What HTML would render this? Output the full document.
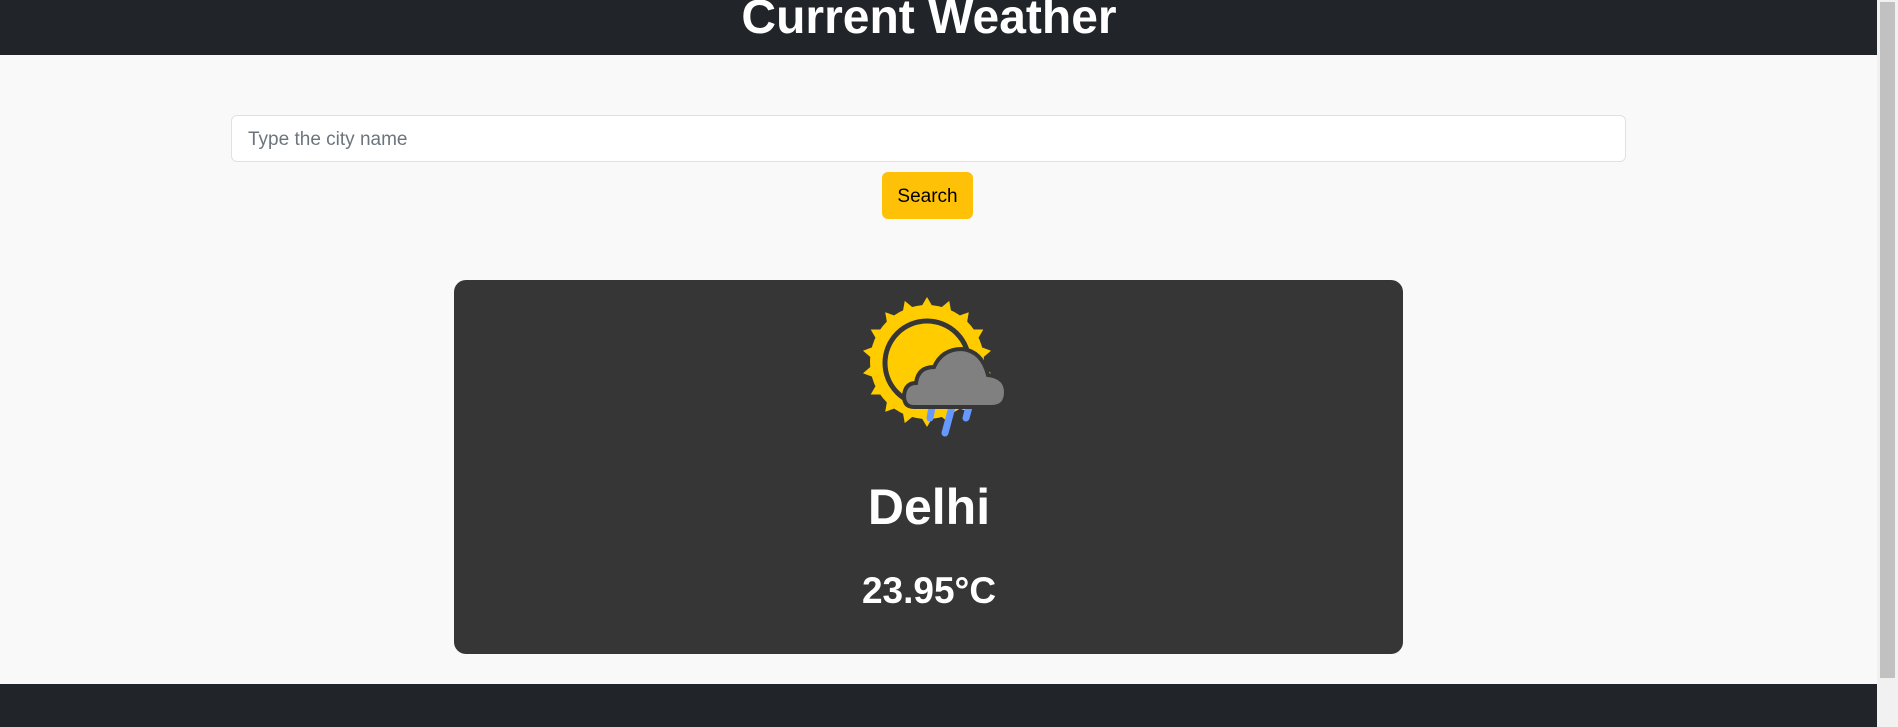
<!DOCTYPE html>
<html><head><meta charset="utf-8"><style>
html,body{margin:0;padding:0;width:1898px;height:727px;overflow:hidden;background:#f9f9f9;font-family:"Liberation Sans",sans-serif;position:relative}
.hdr{position:absolute;left:0;top:0;width:1877px;height:55px;background:#212529;overflow:hidden}
.hdr h1{margin:0;position:absolute;left:0;width:1858px;top:-10px;text-align:center;color:#fff;font-size:48px;font-weight:bold;line-height:56px}
.inp{position:absolute;left:231px;top:115px;width:1395px;height:47px;border:1px solid #dee2e6;border-radius:6px;background:#fff;box-sizing:border-box}
.inp span{position:absolute;left:16px;top:13px;font-size:19px;color:#6c757d}
.btn{position:absolute;left:882px;top:172px;width:91px;height:47px;background:#ffc107;border-radius:6px;text-align:center;line-height:49px;font-size:19px;color:#000}
.card{position:absolute;left:454px;top:280px;width:949px;height:374px;background:#363636;border-radius:12px}
.city{position:absolute;left:0;width:1858px;top:478px;text-align:center;color:#fff;font-weight:bold;font-size:50px}
.temp{position:absolute;left:0;top:570px;text-align:center;color:#fff;font-weight:bold;font-size:37px;width:1858px}
.ftr{position:absolute;left:0;top:684px;width:1877px;height:43px;background:#212529}
.sb{position:absolute;left:1877px;top:0;width:21px;height:727px;background:#f1f1f1}
.sb div{position:absolute;left:3px;top:2px;width:15px;height:676px;background:#c1c1c1}
</style></head><body>
<div class="hdr"><h1>Current Weather</h1></div>
<div class="inp"><span>Type the city name</span></div>
<div class="btn">Search</div>
<div class="card"></div>
<svg style="position:absolute;left:850px;top:285px" width="170" height="170" viewBox="0 0 170 170">
<g fill="#ffcc00">
<circle cx="77" cy="77" r="57"/>
<g id="r"><polygon points="77,12 84,24 70,24"/></g>
<use href="#r" transform="rotate(20 77 77)"/><use href="#r" transform="rotate(40 77 77)"/><use href="#r" transform="rotate(60 77 77)"/><use href="#r" transform="rotate(80 77 77)"/><use href="#r" transform="rotate(100 77 77)"/><use href="#r" transform="rotate(120 77 77)"/><use href="#r" transform="rotate(140 77 77)"/><use href="#r" transform="rotate(160 77 77)"/><use href="#r" transform="rotate(180 77 77)"/><use href="#r" transform="rotate(200 77 77)"/><use href="#r" transform="rotate(220 77 77)"/><use href="#r" transform="rotate(240 77 77)"/><use href="#r" transform="rotate(260 77 77)"/><use href="#r" transform="rotate(280 77 77)"/><use href="#r" transform="rotate(300 77 77)"/><use href="#r" transform="rotate(320 77 77)"/><use href="#r" transform="rotate(340 77 77)"/>
</g>
<circle cx="77" cy="78" r="42" fill="#ffcc00" stroke="#363636" stroke-width="5"/>
<g stroke="#6699ff" stroke-width="7" stroke-linecap="round"><line x1="82" y1="122" x2="80" y2="133"/><line x1="102" y1="122" x2="95" y2="148"/><line x1="119" y1="122" x2="116" y2="133"/></g>
<path d="M64 122 Q54 122 54 111 Q55 98 66 98 Q68 82 84 82 Q92 64 112 64 Q132 66 138 90 Q156 92 156 107 Q156 122 142 122 Z" fill="#808080" stroke="#363636" stroke-width="4"/>
</svg>
<div class="city">Delhi</div>
<div class="temp">23.95°C</div>
<div class="ftr"></div>
<div class="sb"><div></div></div>
</body></html>
